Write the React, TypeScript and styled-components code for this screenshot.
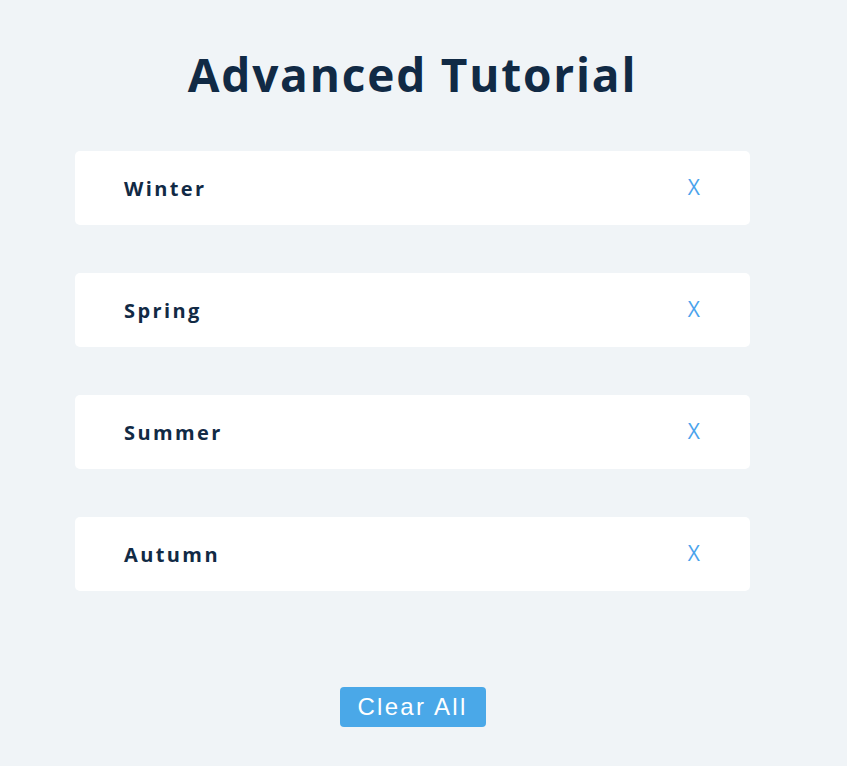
import React, { useState } from "react";
import styled, { createGlobalStyle } from "styled-components";

const Global = createGlobalStyle`
  html, body { margin: 0; padding: 0; background: #f0f4f7; }
  body { font-family: "Open Sans", "Noto Sans", sans-serif; }
`;

const Page = styled.div`
  width: 847px;
  min-height: 766px;
  box-sizing: border-box;
  padding: 39px 0 0 75px;
  display: flex;
  flex-direction: column;
`;

const Column = styled.div`
  width: 675px;
  display: flex;
  flex-direction: column;
  align-items: stretch;
`;

const Title = styled.h1`
  margin: 0 0 42px;
  text-align: center;
  font-size: 46px;
  line-height: 70px;
  font-weight: 700;
  letter-spacing: 1.8px;
  color: #112a45;
`;

const List = styled.ul`
  list-style: none;
  margin: 0;
  padding: 0;
  display: flex;
  flex-direction: column;
  gap: 48px;
`;

const Card = styled.li`
  height: 74px;
  background: #ffffff;
  border-radius: 5px;
  display: flex;
  align-items: center;
  justify-content: space-between;
  padding: 0 50px 0 49px;
`;

const Label = styled.span`
  font-size: 20px;
  font-weight: 700;
  letter-spacing: 2.4px;
  color: #112a45;
`;

const Remove = styled.button`
  border: none;
  background: none;
  padding: 0;
  font-family: "Open Sans", sans-serif;
  font-size: 21px;
  color: #4aa3ec;
  cursor: pointer;
  margin-top: -3px;
`;

const Footer = styled.div`
  display: flex;
  justify-content: center;
  margin-top: 96px;
`;

const ClearButton = styled.button`
  width: 146px;
  height: 40px;
  border: none;
  border-radius: 4px;
  background: #4aa8e8;
  color: #ffffff;
  font-family: "Liberation Sans", Arial, sans-serif;
  font-size: 24px;
  letter-spacing: 2.3px;
  cursor: pointer;
  padding: 0;
`;

export default function App() {
  const [items, setItems] = useState(["Winter", "Spring", "Summer", "Autumn"]);
  return (
    <>
      <Global />
      <Page>
        <Column>
          <Title>Advanced Tutorial</Title>
          <List>
            {items.map((it) => (
              <Card key={it}>
                <Label>{it}</Label>
                <Remove onClick={() => setItems(items.filter((x) => x !== it))}>X</Remove>
              </Card>
            ))}
          </List>
          <Footer>
            <ClearButton onClick={() => setItems([])}>Clear All</ClearButton>
          </Footer>
        </Column>
      </Page>
    </>
  );
}
